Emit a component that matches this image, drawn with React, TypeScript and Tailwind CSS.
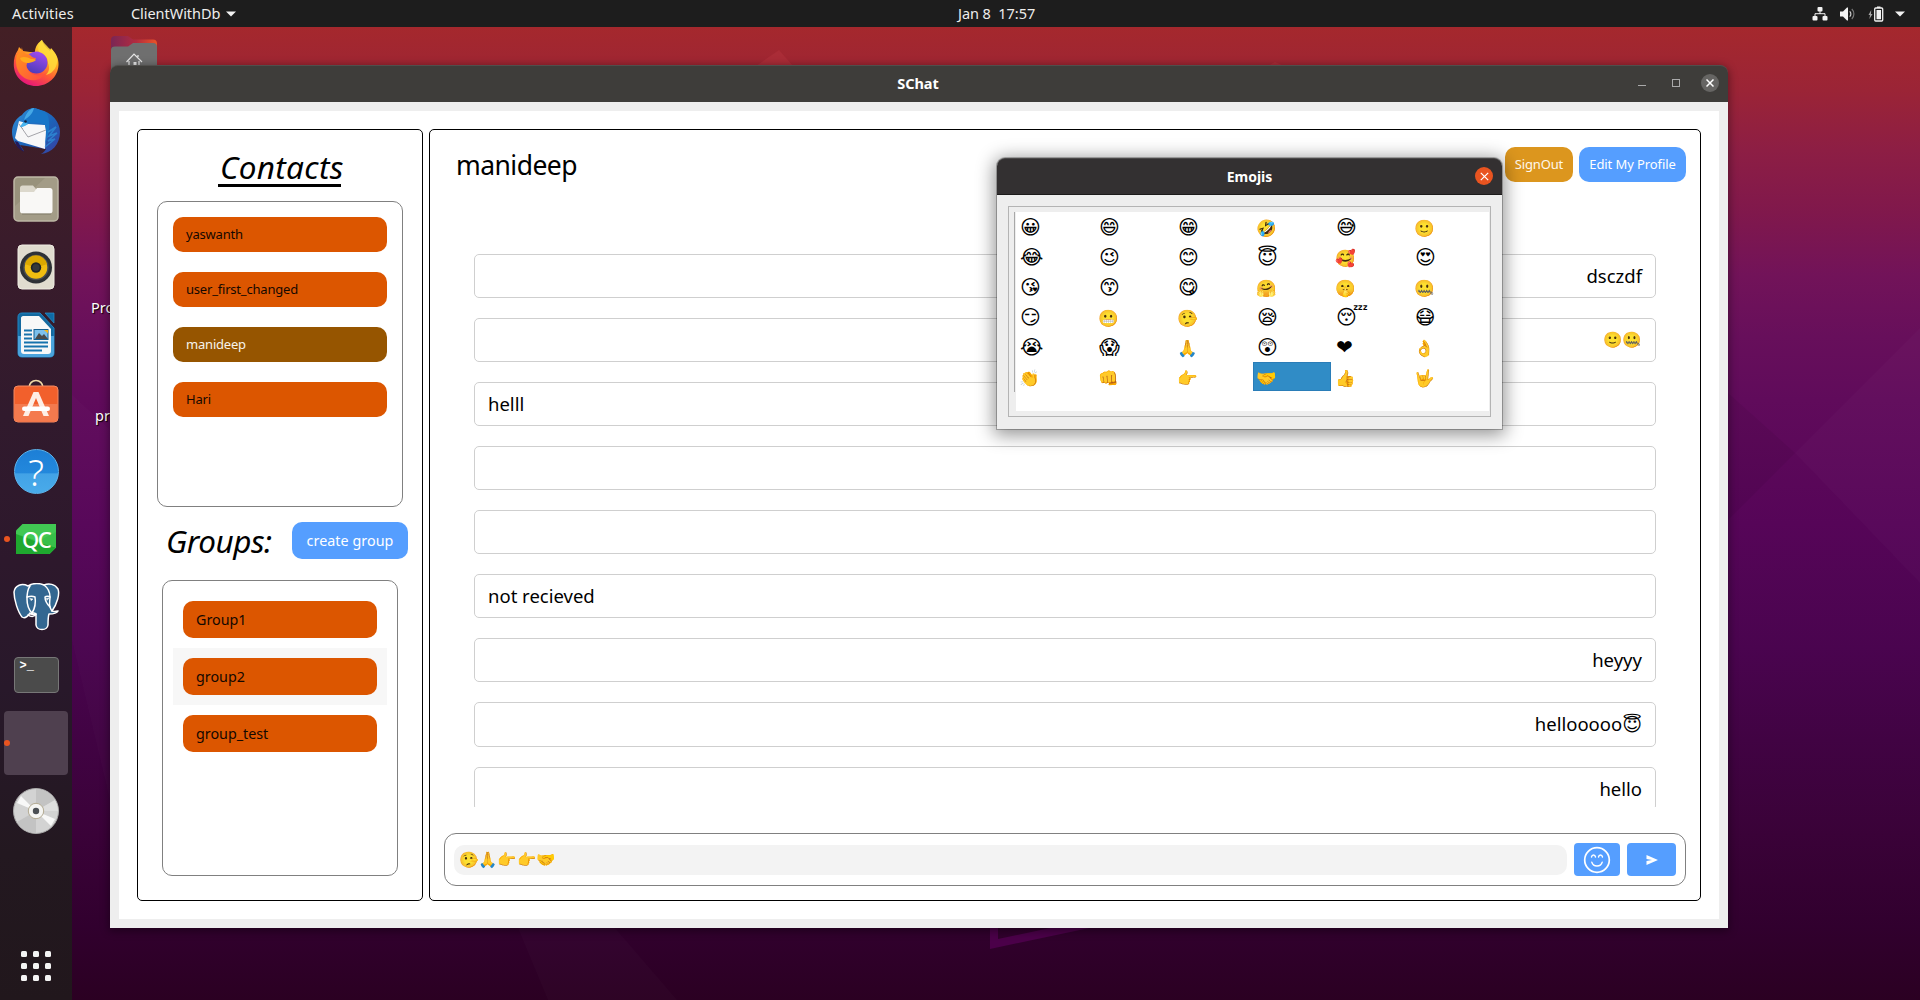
import type { ReactNode } from "react";

function Wallpaper() {
  return (
    <svg className="absolute inset-0 h-full w-full" viewBox="0 0 1920 1000" preserveAspectRatio="none">
      <defs>
        <linearGradient id="wall" x1="0" y1="0" x2="0" y2="1">
          <stop offset="0.027" stopColor="#a5282d" />
          <stop offset="0.09" stopColor="#9b2436" />
          <stop offset="0.15" stopColor="#8d1e44" />
          <stop offset="0.213" stopColor="#80184c" />
          <stop offset="0.275" stopColor="#721359" />
          <stop offset="0.337" stopColor="#670f5b" />
          <stop offset="0.4" stopColor="#600b5b" />
          <stop offset="0.524" stopColor="#560558" />
          <stop offset="0.648" stopColor="#4a044f" />
          <stop offset="0.74" stopColor="#410343" />
          <stop offset="0.834" stopColor="#3a0238" />
          <stop offset="0.927" stopColor="#31002e" />
          <stop offset="1" stopColor="#2b0022" />
        </linearGradient>
      </defs>
      <rect width="1920" height="1000" fill="url(#wall)" />
      <path d="M1728 520 1920 328V583L1795 453Z" fill="#fff" opacity=".018" />
      <path d="M1728 393 1795 453 1728 520Z" fill="#000" opacity=".05" />
      <path d="M72 395 110 430V800L72 640Z" fill="#fff" opacity=".015" />
      <path d="M518 928H615L677 1000H548Z" fill="#fff" opacity=".015" />
      <path d="M779 50 793 66H756Z" fill="#ff6070" opacity=".1" />
      <path d="M1275 62 1284 66H1268Z" fill="#ff6070" opacity=".1" />
      <path d="M994 922V944L1098 922" fill="none" stroke="#4b0049" strokeWidth="8" />
    </svg>
  );
}

function TopBar() {
  return (
    <header className="relative flex h-[27px] shrink-0 items-center justify-between bg-[#1d1d1d] text-[14.5px] leading-[27px] text-[#eeeeec]">
      <div className="flex items-center pl-3">
        <span className="w-[119px] tracking-[0.13px]">Activities</span>
        <span className="tracking-[-0.05px]">ClientWithDb</span>
        <svg className="ml-[6px]" width="10" height="6" viewBox="0 0 10 6" fill="#f2f2f2">
          <path d="M0 .5h10L5 5.5Z" />
        </svg>
      </div>
      <span className="absolute left-[958px] whitespace-pre tracking-[-0.05px]">Jan 8  17:57</span>
      <div className="flex items-center pr-[15px]">
        <svg width="16" height="15" viewBox="0 0 16 15" fill="#f2f2f2">
          <rect x="5.5" y="1" width="5" height="4.5" rx="1" />
          <rect x="0.5" y="10" width="5" height="4.5" rx="1" />
          <rect x="10.5" y="10" width="5" height="4.5" rx="1" />
          <path d="M8 5v3M3 11V7.7h10V11" fill="none" stroke="#f2f2f2" />
        </svg>
        <svg className="ml-[12px]" width="16" height="14" viewBox="0 0 16 14" fill="none">
          <path d="M0 4.5h3L7 .5h1v13H7L3 9.5H0Z" fill="#f2f2f2" />
          <path d="M9.7 4.4a3.5 3.5 0 0 1 0 5.2" stroke="#d0d0d0" strokeWidth="1.2" />
          <path d="M11.8 2a7 7 0 0 1 0 10" stroke="#777" strokeWidth="1.2" />
        </svg>
        <svg className="ml-[12px]" width="16" height="16" viewBox="0 0 16 16" fill="none">
          <path d="M3.2 4 .5 9H2l-.6 4L4.500 8H3Z" fill="#a5a5a5" />
          <rect x="6.700" y="2" width="8" height="13" rx="1" stroke="#f2f2f2" strokeWidth="1.3" />
          <path d="M9 .5h3.500V2H9ZM8.500 4h4.500v9.300H8.500Z" fill="#f2f2f2" />
        </svg>
        <svg className="ml-[11px]" width="10" height="6" viewBox="0 0 10 6" fill="#f2f2f2">
          <path d="M0 .5h10L5 5.500Z" />
        </svg>
      </div>
    </header>
  );
}

function Firefox() {
  return (
    <svg width="46" height="48" viewBox="0 0 46 48">
      <defs>
        <linearGradient id="ffb" x1=".8" y1="0" x2=".3" y2="1">
          <stop offset="0" stopColor="#fff44f" />
          <stop offset=".35" stopColor="#ffb01f" />
          <stop offset=".65" stopColor="#ff5a36" />
          <stop offset="1" stopColor="#e5127e" />
        </linearGradient>
        <linearGradient id="ffg" x1=".7" y1="0" x2=".3" y2="1">
          <stop offset="0" stopColor="#a24bf0" />
          <stop offset="1" stopColor="#4a3cb8" />
        </linearGradient>
        <linearGradient id="ffh" x1="0" y1="0" x2="1" y2="1">
          <stop offset="0" stopColor="#ff9a1a" />
          <stop offset="1" stopColor="#ff4a40" />
        </linearGradient>
      </defs>
      <path d="M29 1c1 5 5 8 8 11l1-3c5 5 8 11 7.500 17C45 38 35 47 23 47S1 38 .8 26C.6 20 2 15 5 11l1-3 4 4 7 1h5c0-6 4-10 7-12Z" fill="url(#ffb)" />
      <circle cx="23.500" cy="23.500" r="11" fill="url(#ffg)" />
      <path d="M29 1c-3 3-5 8-3 12 6 2 9 6 9 11 2 5 1 9-2 12 8-2 12-9 11-17-1-6-7-8-10-12-2-2-4-4-5-6Z" fill="#ffdc3c" opacity=".85" />
      <path d="M9 8 8 13l-4 3C2 22 3 32 9 37c8 7 19 5 24-3-6 4-14 3-18-3-2-3-2-6 0-8 4 0 7-1 8-4-3 0-4-1-6-3-2-1-5-1-6-3C9 11 9 9 9 8Z" fill="url(#ffh)" />
      <path d="M7 19c3-2 8-1 11 1 2 0 4 0 5 1-2 2-5 2-7 3-4 0-8-1-9-5Z" fill="#ffac1c" />
    </svg>
  );
}

function Thunderbird() {
  return (
    <svg width="48" height="48" viewBox="0 0 48 48">
      <defs>
        <linearGradient id="tb" x1="0" y1="0" x2="1" y2="1">
          <stop offset="0" stopColor="#2f8fd8" />
          <stop offset=".55" stopColor="#1c62b8" />
          <stop offset="1" stopColor="#3a3ea0" />
        </linearGradient>
      </defs>
      <path d="M10 8C14 2 22-1 28 3c12 2 20 12 20 22 0 12-8 21-19 22 3-2 4-3 5-5L8 38l4 6C4 40 0 33 0 25 0 18 4 11 10 8Z" fill="url(#tb)" />
      <path d="M6 35 12 45C7 42 4 40 3 34Z" fill="#241a5a" />
      <path d="M7 14 17 17 33 18 34 24 33 42 6 34 3 31Z" fill="#f7f7f8" />
      <path d="M7 17 16 30 34 23M8 19 11 22" fill="none" stroke="#9a9aa0" strokeWidth=".9" />
      <path d="M9 20 12 14C13 7 16 2 21 1c6 1 13 3 15 8 3 10 0 21-3 29 1-7 2-15 0-20-4-2-11-3-15-2-3 1-5 3-9 4Z" fill="#1976c8" />
      <path d="M12 13C14 5 19 1 22 1c-1 4-3 8-10 12Z" fill="#45a8e6" />
      <path d="M8 20c1-2 2-4 4-5 2 0 3 1 4 2-2 1-4 3-8 3Z" fill="#49b4ee" />
      <circle cx="13.500" cy="14.500" r="1.300" fill="#16223f" />
      <path d="M36 25l8-5-7 9 8-3-9 8 7-2-10 8" fill="none" stroke="#2f93dc" strokeWidth="1.500" opacity=".7" />
    </svg>
  );
}

function Files() {
  return (
    <svg width="46" height="46" viewBox="0 0 46 46">
      <rect x="1" y="1" width="44" height="44" rx="4" fill="#a39c87" stroke="#bdb7a5" strokeWidth="1.500" />
      <path d="M2 30 32 2H6a4 4 0 0 0-4 4Z" fill="#8e8771" opacity=".5" />
      <path d="M7 12c0-1.500 1-2.500 2.500-2.500H20L23 13v5H7Z" fill="#dcd8cc" />
      <path d="M7 16h14l3-4h13c1.500 0 2.500 1 2.500 2.500V35c0 1.500-1 2.500-2.500 2.500H9.500C8 37.500 7 36.500 7 35Z" fill="#f9f8f6" />
      <path d="M9 38h29" stroke="#6b6554" opacity=".6" />
    </svg>
  );
}

function Speaker() {
  return (
    <svg width="38" height="46" viewBox="0 0 38 46">
      <rect x="1" y="1" width="36" height="44" rx="4" fill="#e0dccf" stroke="#efece3" />
      <circle cx="19" cy="23.500" r="16" fill="#2d3136" />
      <circle cx="19" cy="23.500" r="12.800" fill="#4b4e50" />
      <circle cx="19" cy="23.500" r="11.300" fill="#f0bd10" />
      <path d="M8 20A11.300 11.300 0 0 1 30 20L19 24Z" fill="#dba800" />
      <circle cx="19" cy="23.500" r="5.200" fill="#202428" />
      <circle cx="19" cy="23.500" r="3.500" fill="#34383b" />
    </svg>
  );
}

function Writer() {
  return (
    <svg width="38" height="46" viewBox="0 0 38 46">
      <path d="M5 1h18l14 15v25c0 2.500-1.500 4-4 4H5c-2.500 0-4-1.500-4-4V5c0-2.500 1.500-4 4-4Z" fill="#14699f" stroke="#1f86c4" />
      <path d="M1 24h36v17c0 2.500-1.500 4-4 4H5c-2.500 0-4-1.500-4-4Z" fill="#4aa3dc" />
      <path d="M28 1h9v10Z" fill="#0e6ba6" stroke="#2b93cf" strokeWidth=".7" />
      <path d="M6 4h16l12 13v22c0 2-1 3-3 3H7c-2 0-3-1-3-3V6c0-1 1-2 2-2Z" fill="#f8f8f8" />
      <path d="M7 18.500h8M7 22.500h8M7 26.500h8M7 30.500h24M7 34.500h24M7 38.500h18" stroke="#1673ad" strokeWidth="1.900" />
      <rect x="17" y="17.500" width="14" height="10" fill="#7cc0ec" stroke="#155f90" />
      <path d="m18 27 4-6 3 3 2-2 4 5Z" fill="#4a4a4a" />
      <path d="M27 18h4v3.500Z" fill="#f4b61a" />
    </svg>
  );
}

function Software() {
  return (
    <svg className="mb-1" width="46" height="44" viewBox="0 0 46 44">
      <path d="M16 9c0-10 14-10 14 0" fill="none" stroke="#efd9a6" strokeWidth="1.700" />
      <rect x="1" y="7" width="44" height="36" rx="4" fill="#f2602c" stroke="#f58a62" />
      <path d="M1.500 25h43v14c0 2.500-1.500 3.500-3.500 3.500H5c-2 0-3.500-1-3.500-3.500Z" fill="#f47a4e" />
      <path d="M20.500 13h5L36 37h-5.500L23 19l-7.500 18H10Z" fill="#fdeee6" />
      <rect x="9" y="27.500" width="28" height="4.500" rx="2.200" fill="#fff" />
    </svg>
  );
}

function Help() {
  return (
    <div className="flex h-[45px] w-[45px] items-center justify-center rounded-full border border-[#5cb2ea] bg-[linear-gradient(#1d7fd6_0%,#2388dc_54%,#42a2e6_55%,#49abea_100%)] text-[37px] leading-[45px] font-light text-white">
      ?
    </div>
  );
}

function QtCreator() {
  return (
    <div className="relative flex h-[30px] w-10 items-center justify-center">
      <svg className="absolute inset-0" width="40" height="30" viewBox="0 0 40 30">
        <path d="M6.500 0H40v23.500L33.500 30H0V6.500Z" fill="#41c853" />
        <path d="M0 10 40 23.500 33.500 30H0Z" fill="#1fa82f" />
        <path d="M0 10 22 17 40 8v15.500L24 19Z" fill="#38bf49" />
      </svg>
      <span className="relative text-[22px] leading-[30px] font-medium tracking-[-1.5px] text-white">QC</span>
    </div>
  );
}

function Postgres() {
  return (
    <svg width="47" height="48" viewBox="0 0 47 48" fill="#336791" stroke="#fff" strokeWidth="1.500" strokeLinejoin="round" strokeLinecap="round">
      <path d="M15 3C9 0 2 2 1 9c0 8 4 20 8 25 3 2 6-1 8-4 2 2 4 2 6 1v11c1 6 11 6 12 0 0-5 0-8 1-11 4 0 8-1 9-3-2 0-4 1-6 0 5-7 8-17 6-22C42 1 36 0 31 2c-5-2-11-2-16 1Z" />
      <path d="M17 3c-3 4-3 9-3 13 0 6 1 10 5 14M31 2c4 3 6 7 6 12 0 5-2 9 2 14" fill="none" />
      <path d="M14 14c3-1 6-1 8 0 1 6 0 11-3 16M37 14c-1-1-4-1-5 0 0 3 2 7 5 10M15 32c3 2 7 2 8-1-2-2-4-1-6 0" fill="none" />
      <path d="M17 15.500l3 .5-1.500 1.500ZM33 15.500l3-.5-1.500 2Z" fill="#fff" strokeWidth=".5" />
    </svg>
  );
}

function Terminal() {
  return (
    <div className="h-[36px] w-[45px] rounded-[4px] border border-[#777] bg-[#4b4b4b] pl-[5px] font-['Liberation_Mono'] text-[12px] leading-[16px] font-bold text-white">
      &gt;_
    </div>
  );
}

function Disc() {
  return (
    <svg width="46" height="46" viewBox="0 0 46 46">
      <circle cx="23" cy="23" r="22.500" fill="#d3d3d3" stroke="#aaa" />
      <path d="M23 23V1A22 22 0 0 1 42 12ZM23 23v22A22 22 0 0 1 4 34Z" fill="#c3c3c3" />
      <path d="M23 23 42 12A22 22 0 0 1 45 23Z" fill="#dedede" />
      <path d="m23 23-19-8 4-7ZM23 23l19 8-4 7Z" fill="#f8f8f8" />
      <circle cx="23" cy="23" r="7.700" fill="#f5f5f3" stroke="#b3aa92" />
      <circle cx="23" cy="23" r="3.200" fill="#4b4f54" />
    </svg>
  );
}

function DockItem({ children, running, active }: { children?: ReactNode; running?: boolean; active?: boolean }) {
  return (
    <div className="relative flex h-[68px] items-center justify-center">
      {active && <div className="h-16 w-16 rounded-[4px] bg-[#4f404f]" />}
      {running && <div className="absolute top-[31px] left-1 h-[6px] w-[6px] rounded-full bg-[#e95420]" />}
      {children}
    </div>
  );
}

function Dock() {
  return (
    <nav className="relative flex w-[72px] shrink-0 flex-col bg-[linear-gradient(#431f25_0%,#3a1c2b_22%,#311a2d_40%,#2d182c_55%,#28182a_68%,#231820_85%,#21171c_100%)] pt-[2px]">
      <DockItem><Firefox /></DockItem>
      <DockItem><Thunderbird /></DockItem>
      <DockItem><Files /></DockItem>
      <DockItem><Speaker /></DockItem>
      <DockItem><Writer /></DockItem>
      <DockItem><Software /></DockItem>
      <DockItem><Help /></DockItem>
      <DockItem running><QtCreator /></DockItem>
      <DockItem><Postgres /></DockItem>
      <DockItem><Terminal /></DockItem>
      <DockItem running active />
      <DockItem><Disc /></DockItem>
      <div className="mt-auto mb-[19px] ml-[21px] grid w-[30px] grid-cols-3 gap-[6px]">
        {Array.from({ length: 9 }, (_, i) => (
          <div key={i} className="h-[6px] w-[6px] rounded-[1.5px] bg-[#f4f4f4]" />
        ))}
      </div>
    </nav>
  );
}

function HomeFolder() {
  return (
    <svg className="absolute top-[36px] left-[111px]" width="46" height="40" viewBox="0 0 46 40">
      <defs>
        <linearGradient id="fold">
          <stop offset="0" stopColor="#7a2655" />
          <stop offset=".55" stopColor="#b22b3f" />
          <stop offset="1" stopColor="#ea5327" />
        </linearGradient>
      </defs>
      <path d="M0 4c0-2.500 1.500-4 4-4h13l5 3.500h20c2.500 0 4 1.500 4 4V40H0Z" fill="url(#fold)" />
      <path d="M0 14c0-2.500 1.500-3.500 4-3.500h13l5-3.500h20c2.500 0 4 1.500 4 4v29H0Z" fill="#6f6f6f" />
      <path d="m15.500 26 7.500-8 8 8M18 25v6M28 25v6M27 19v2" fill="none" stroke="#e6e6e6" strokeWidth="1.200" />
      <rect x="22.500" y="26" width="3" height="4" fill="#e6e6e6" />
    </svg>
  );
}

function Contact({ name, selected }: { name: string; selected?: boolean }) {
  return (
    <div className={"h-[35px] rounded-[10px] pl-[13px] text-[13px] leading-[35px] tracking-[-0.2px] " + (selected ? "bg-[#965500] text-[#f7f3ec]" : "bg-[#dc5600] text-[#140800]")}>
      {name}
    </div>
  );
}

function Group({ name, hovered }: { name: string; hovered?: boolean }) {
  return (
    <div className={"p-[10px] " + (hovered ? "bg-[#f7f7f7]" : "")}>
      <div className="h-[37px] rounded-[10px] bg-[#dc5600] pl-[13px] text-[14.3px] leading-[38px] text-[#140800]">{name}</div>
    </div>
  );
}

function Sidebar() {
  return (
    <aside className="flex w-[286px] shrink-0 flex-col rounded-[5px] border border-black">
      <div className="ml-[80px] mt-[16px] h-[41px] w-[123px] border-b-[3px] border-black pl-[2px] text-[31.5px] leading-[42px] tracking-[0.3px] whitespace-nowrap italic">
        Contacts
      </div>
      <div className="mt-[14px] ml-[19px] flex h-[306px] w-[246px] flex-col gap-5 rounded-[10px] border border-[#808080] p-[15px]">
        <Contact name="yaswanth" />
        <Contact name="user_first_changed" />
        <Contact name="manideep" selected />
        <Contact name="Hari" />
      </div>
      <div className="mt-[15px] flex h-[37px] items-center justify-between pr-[14px] pl-[28px]">
        <span className="text-[31.5px] leading-[37px] tracking-[-0.5px] italic">Groups:</span>
        <button className="h-[37px] w-[116px] rounded-[10px] bg-[#559eff] text-[14.3px] leading-[37px] tracking-[0.05px] text-white">create group</button>
      </div>
      <div className="mt-[21px] ml-[24px] h-[296px] w-[236px] rounded-[10px] border border-[#808080] px-[10px] pt-[10px]">
        <Group name="Group1" />
        <Group name="group2" hovered />
        <Group name="group_test" />
      </div>
    </aside>
  );
}

function Message({ text, mine, emoji, tall }: { text?: string; mine?: boolean; emoji?: string; tall?: boolean }) {
  return (
    <div className={"flex shrink-0 items-center rounded-[5px] border border-[#cfcfcf] px-[13px] text-[18.5px] leading-none " + (mine ? "justify-end " : "") + (tall ? "h-[45px]" : "h-[44px]")}>
      <span>{text}</span>
      {emoji && <span className="font-['DejaVu_Sans'] text-[19px] leading-none">{emoji}</span>}
    </div>
  );
}

function Chat() {
  return (
    <main className="flex w-[1272px] shrink-0 flex-col rounded-[5px] border border-black">
      <div className="mt-[17px] flex h-[35px] items-center pr-[14px] pl-[26px]">
        <h1 className="pt-px text-[26.5px] leading-[35px] tracking-[-0.55px]">manideep</h1>
        <button className="ml-auto h-[35px] w-[68px] rounded-[10px] bg-[#dc961e] text-[13px] leading-[35px] tracking-[-0.15px] text-[#fff8ec]">SignOut</button>
        <button className="ml-[6px] h-[35px] w-[107px] rounded-[10px] bg-[#559eff] text-[13px] leading-[35px] tracking-[-0.1px] text-white">Edit My Profile</button>
      </div>
      <div className="mt-[72px] ml-[44px] flex h-[553px] w-[1182px] flex-col gap-5 overflow-hidden">
        <Message text="dsczdf" mine />
        <div className="flex h-[44px] shrink-0 items-center justify-end rounded-[5px] border border-[#cfcfcf] px-[13px] pt-px font-['Noto_Color_Emoji'] text-[15.5px] leading-none">🙂🤐</div>
        <Message text="helll" />
        <Message />
        <Message />
        <Message text="not recieved" />
        <Message text="heyyy" mine />
        <Message text="hellooooo" emoji="😇" mine tall />
        <Message text="hello" mine />
      </div>
      <div className="mt-[26px] ml-[14px] flex h-[53px] w-[1242px] items-center rounded-[12px] border border-[#808080] pl-[9px] pr-[8px]">
        <div className="h-[30px] w-[1113px] rounded-[10px] bg-[#f3f3f3] pl-[5px] font-['Noto_Color_Emoji'] text-[15.5px] leading-[31px]">🤥🙏👉👉🤝</div>
        <button className="ml-[7px] flex h-[33px] w-[46px] items-center justify-center rounded-[4px] bg-[#559eff]">
          <svg width="28" height="28" viewBox="0 0 28 28" fill="none" stroke="#fff" strokeWidth="1.700" strokeLinecap="round">
            <circle cx="14" cy="14" r="12.300" />
            <path d="M8.500 11c.5-2.600 3.500-2.600 4 0M15.500 11c.5-2.600 3.500-2.600 4 0M8.800 16.200c1.600 5 8.800 5 10.400 0" strokeWidth="1.400" />
          </svg>
        </button>
        <button className="ml-[7px] flex h-[33px] w-[49px] items-center justify-center rounded-[4px] bg-[#559eff]">
          <svg width="12" height="10" viewBox="0 0 12 10" fill="#fff">
            <path d="M.5 0 12 5 .5 10V6L6 5 .5 4Z" />
          </svg>
        </button>
      </div>
    </main>
  );
}

function ChatWindow() {
  return (
    <section className="absolute top-[65px] left-[110px] flex h-[863px] w-[1618px] flex-col rounded-t-[8px] shadow-[0_2px_8px_1px_rgba(0,0,0,0.4)]">
      <div className="relative flex h-[37px] shrink-0 items-center justify-center rounded-t-[8px] border-t border-[#504f4c] bg-[#3e3d3a] text-[14.5px] font-bold text-white">
        <span className="pr-[2px] pb-[2px] leading-[34px]">SChat</span>
        <div className="absolute top-[8px] right-[9px] flex items-center">
          <div className="mt-[5px] h-px w-2 bg-[#aaa]" />
          <div className="ml-[26px] h-2 w-2 border border-[#aaa]" />
          <div className="ml-[21px] flex h-[18px] w-[18px] items-center justify-center rounded-full bg-[#666563]">
            <svg width="8" height="8" viewBox="0 0 8 8" stroke="#fff" strokeWidth="1.500"><path d="m.5.5 7 7m0-7-7 7" /></svg>
          </div>
        </div>
      </div>
      <div className="flex grow bg-[#eeeeee] p-[9px]">
        <div className="flex grow gap-[6px] bg-white px-[18px] py-[18px]">
          <Sidebar />
          <Chat />
        </div>
      </div>
    </section>
  );
}

const emojiRows = [
  ["😀", "😄", "😁", "🤣", "😅", "🙂"],
  ["😂", "😉", "😊", "😇", "🥰", "😍"],
  ["😘", "😙", "😋", "🤗", "🤫", "🤐"],
  ["😏", "😬", "🤥", "😪", "😴", "😷"],
  ["😭", "😱", "🙏", "😲", "❤", "👌"],
  ["👏", "👊", "👉", "🤝", "👍", "🤟"],
];

const outlined = "😀😄😁😅😂😉😊😇😍😘😙😋😏😪😴😷😭😱😲❤";

function EmojiDialog() {
  return (
    <section className="absolute top-[158px] left-[997px] flex h-[271px] w-[505px] flex-col rounded-t-[8px] bg-[#eeeeee] shadow-[0_3px_18px_3px_rgba(0,0,0,0.42),0_0_0_1px_rgba(0,0,0,0.25)]">
      <div className="relative flex h-[37px] shrink-0 items-center justify-center rounded-t-[8px] border-t border-b border-t-[#4a4848] border-b-[#1c1b1b] bg-[#333031] text-[14px] font-bold text-white">
        <span className="leading-[36px]">Emojis</span>
        <div className="absolute top-[8px] right-[9px] flex h-[18px] w-[18px] items-center justify-center rounded-full bg-[#e95420]">
          <svg width="9" height="9" viewBox="0 0 9 9" stroke="#fff" strokeWidth="1.200"><path d="m.8.8 7.400 7.400m0-7.400L.8 8.200" /></svg>
        </div>
      </div>
      <div className="mx-[11px] mt-[11px] flex h-[211px] border border-[#b4b4b4] p-[5px]">
        <div className="mr-px h-[180px] w-[2px] border-r border-[#a8a8a8]" />
        <div className="grow bg-white">
          {emojiRows.map((row, r) => (
            <div key={r} className="flex h-[30px] gap-px">
              {row.map((e) =>
                outlined.includes(e) ? (
                  <div key={e} className="w-[78px] pl-[4px] font-['DejaVu_Sans'] text-[20px] leading-[30px]">{e}</div>
                ) : (
                  <div key={e} className={"h-[29px] w-[78px] font-['Noto_Color_Emoji'] text-[16.5px] " + (e === "🤝" ? "border border-[#2a7db8] bg-[#308cc6] pl-[2px] leading-[31px]" : "pl-[3px] leading-[33px]")}>{e}</div>
                )
              )}
            </div>
          ))}
        </div>
      </div>
    </section>
  );
}

export default function App() {
  return (
    <div className="relative flex h-[1000px] w-[1920px] flex-col overflow-hidden bg-[#2b0022] font-['Noto_Sans',sans-serif] text-black">
      <Wallpaper />
      <TopBar />
      <div className="flex grow">
        <Dock />
      </div>
      <HomeFolder />
      <span className="absolute top-[297px] left-[91px] text-[14.5px] leading-5 text-white [text-shadow:1px_1px_1px_#000]">Pro</span>
      <span className="absolute top-[405px] left-[95px] text-[14.5px] leading-5 text-white [text-shadow:1px_1px_1px_#000]">pr</span>
      <ChatWindow />
      <EmojiDialog />
    </div>
  );
}
